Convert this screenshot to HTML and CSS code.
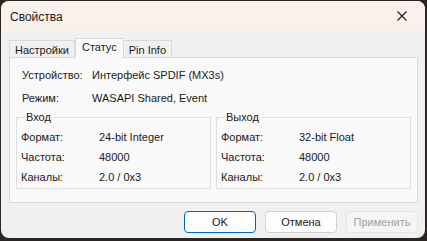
FILE: index.html
```html
<!DOCTYPE html>
<html lang="ru">
<head>
    <meta charset="UTF-8">
    <title>Свойства</title>
<link rel="stylesheet" href="styles.css">
</head>
<body>
    <div class="window">
        <div class="titlebar">
            <span class="title">Свойства</span>
            <button class="close-btn" aria-label="Закрыть">
                <svg width="10" height="10" viewBox="0 0 10 10"><path d="M0.5 0.5 L9.5 9.5 M9.5 0.5 L0.5 9.5" stroke="#1b1b1b" stroke-width="1.1" fill="none"/></svg>
            </button>
        </div>

        <div class="content">
            <div class="tabs">
                <div class="tab">Настройки</div>
                <div class="tab active">Статус</div>
                <div class="tab">Pin Info</div>
            </div>

            <div class="panel">
                <div class="info-rows">
                    <span>Устройство:</span><span>Интерфейс SPDIF (MX3s)</span>
                    <span>Режим:</span><span>WASAPI Shared, Event</span>
                </div>

                <div class="groups">
                    <fieldset class="group">
                        <legend>Вход</legend>
                        <div class="group-rows">
                            <span>Формат:</span><span>24-bit Integer</span>
                            <span>Частота:</span><span>48000</span>
                            <span>Каналы:</span><span>2.0 / 0x3</span>
                        </div>
                    </fieldset>
                    <fieldset class="group">
                        <legend>Выход</legend>
                        <div class="group-rows">
                            <span>Формат:</span><span>32-bit Float</span>
                            <span>Частота:</span><span>48000</span>
                            <span>Каналы:</span><span>2.0 / 0x3</span>
                        </div>
                    </fieldset>
                </div>
            </div>

            <div class="buttons">
                <button class="btn btn-default">OK</button>
                <button class="btn">Отмена</button>
                <button class="btn" disabled>Применить</button>
            </div>
        </div>
    </div>
</body>
</html>
```

FILE: styles.css
```css
:root {
    --desktop: #2d2521;
    --title-bg: #f9f1ec;
    --window-bg: #f0f0f0;
    --panel-bg: #f9f9f9;
    --border: #d9d9d9;
    --group-border: #dfdfdf;
    --text: #1a1a1a;
    --accent: #0067c0;
}

* {
    margin: 0;
    padding: 0;
    box-sizing: border-box;
}

body {
    background-color: var(--desktop);
    font-family: 'Segoe UI', 'Liberation Sans', Arial, sans-serif;
    font-size: 11px;
    color: var(--text);
}

.window {
    margin: 1px 0 0 1px;
    width: 424px;
    height: 237px;
    border-radius: 8px;
    overflow: hidden;
    background-color: var(--window-bg);
    display: flex;
    flex-direction: column;
}

/* --- title bar --- */
.titlebar {
    height: 30px;
    flex-shrink: 0;
    background-color: var(--title-bg);
    display: flex;
    align-items: center;
    justify-content: space-between;
    padding: 0 9px 0 9px;
}
.title { font-size: 12px; padding-top: 1px; }
.close-btn {
    border: none;
    background: none;
    width: 10px;
    height: 10px;
    display: flex;
    margin-right: 9px;
}

.content {
    flex: 1;
    padding: 7px 6px 0 8px;
    display: flex;
    flex-direction: column;
}

/* --- tabs --- */
.tabs {
    display: flex;
    align-items: flex-end;
    height: 19px;
}
.tab {
    height: 17px;
    line-height: 18px;
    padding: 0 5px;
    border: 1px solid var(--border);
    border-bottom: none;
    background-color: var(--window-bg);
}
.tab + .tab { border-left: none; }
.tab.active {
    height: 20px;
    line-height: 17px;
    margin-bottom: -1px;
    padding: 0 6px;
    background-color: var(--panel-bg);
    border-left: 1px solid var(--border);
    position: relative;
    z-index: 1;
}

/* --- panel --- */
.panel {
    height: 146px;
    width: 409px;
    background-color: var(--panel-bg);
    border: 1px solid var(--border);
    padding: 7px 6px 0 6px;
}

.info-rows {
    display: grid;
    grid-template-columns: 70px 1fr;
    grid-auto-rows: 20px;
    row-gap: 3px;
    align-items: center;
    padding-left: 6px;
}

.groups {
    display: flex;
    gap: 5px;
    margin-top: 2px;
}
.group {
    width: 195px;
    height: 79px;
    border: 1px solid var(--group-border);
    padding: 3px 0 0 4px;
}
.group legend {
    margin-left: 4px;
    padding: 0 3px 0 1px;
    line-height: 14px;
}
.group-rows {
    display: grid;
    grid-template-columns: 78px 1fr;
    grid-auto-rows: 20px;
    align-items: center;
}

/* --- buttons --- */
.buttons {
    display: flex;
    justify-content: flex-end;
    gap: 9px;
    margin-top: 8px;
    width: 409px;
}
.btn {
    width: 72px;
    height: 22px;
    font-family: inherit;
    font-size: 11px;
    color: var(--text);
    background-color: #fdfdfd;
    border: 1px solid #d0d0d0;
    border-radius: 4px;
}
.btn-default {
    border-color: var(--accent);
}
.btn:disabled {
    color: #a0a0a0;
    background-color: #f5f5f5;
    border-color: #e5e5e5;
}
```
